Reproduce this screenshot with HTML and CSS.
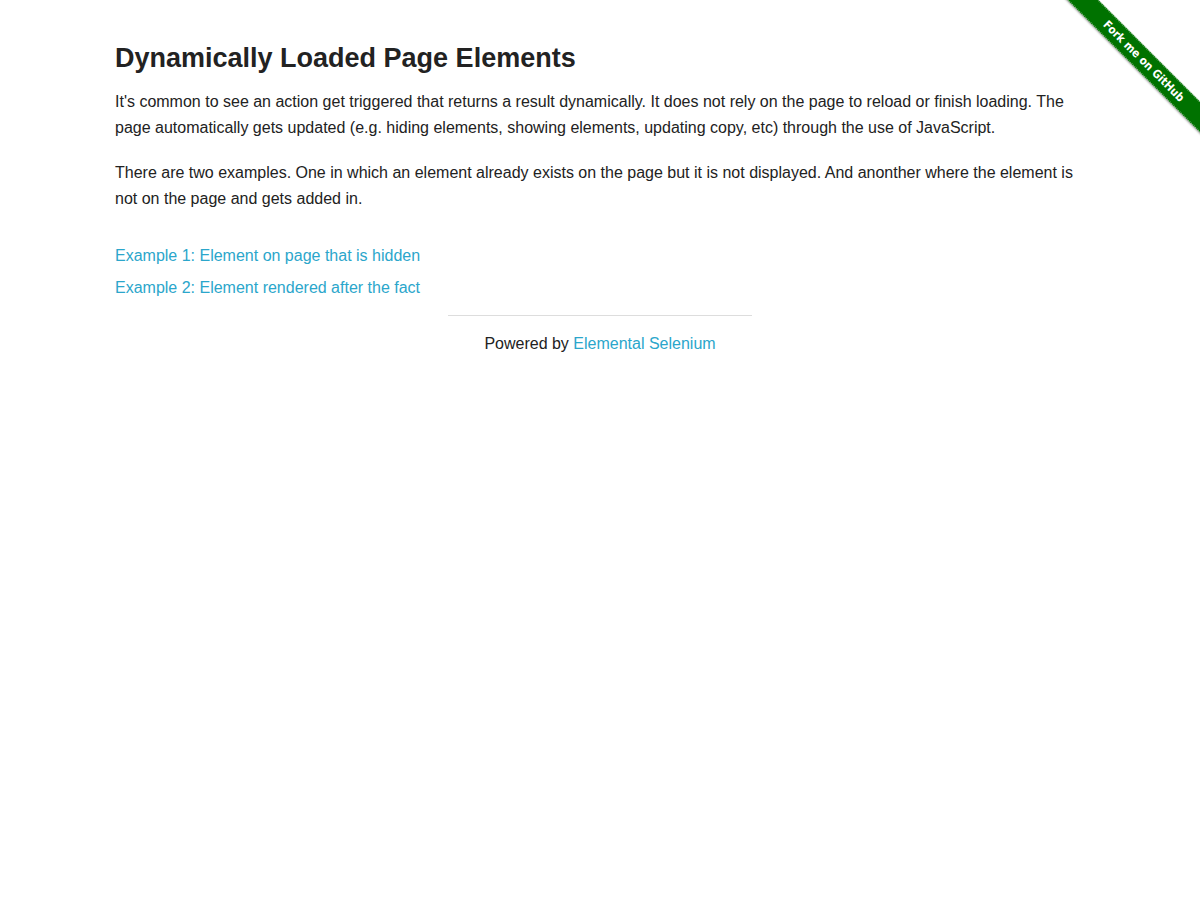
FILE: index.html
```html
<!DOCTYPE html>
<html>
<head>
<meta charset="utf-8">
<title>The Internet</title>
<link rel="stylesheet" href="styles.css">
</head>
<body>
<a class="ribbon" href="#"><span class="ribbon-band">Fork me on GitHub</span></a>
<div class="row">
  <div class="content">
    <h3 class="title">Dynamically Loaded Page Elements</h3>
    <p class="para">It's common to see an action get triggered that returns a result dynamically. It does not rely on the page to reload or finish loading. The page automatically gets updated (e.g. hiding elements, showing elements, updating copy, etc) through the use of JavaScript.</p>
    <p class="para">There are two examples. One in which an element already exists on the page but it is not displayed. And anonther where the element is not on the page and gets added in.</p>
    <div class="links">
      <a class="link" href="#">Example 1: Element on page that is hidden</a>
      <a class="link" href="#">Example 2: Element rendered after the fact</a>
    </div>
  </div>
</div>
<div class="footer">
  <hr class="rule">
  <div class="powered">Powered by <a class="link-inline" href="#">Elemental Selenium</a></div>
</div>
</body>
</html>
```
FILE: styles.css
```css
html, body {
  margin: 0;
  padding: 0;
  background: #fff;
}
body {
  font-family: "Liberation Sans", Arial, Helvetica, sans-serif;
  font-size: 16px;
  color: #222;
}
.row {
  max-width: 1000px;
  margin: 0 auto;
}
.content {
  padding: 39px 15px 0;
}
.title {
  margin: 0 0 12px;
  font-size: 27px;
  line-height: 38px;
  font-weight: bold;
  color: #222;
}
.para {
  margin: 0 0 20px;
  line-height: 25.6px;
}
.links {
  display: flex;
  flex-direction: column;
  align-items: flex-start;
  padding-top: 9px;
}
.link, .link-inline {
  color: #2ba6cb;
  text-decoration: none;
}
.link {
  line-height: 32px;
}
.footer {
  width: 304px;
  margin: 0 auto;
}
.rule {
  margin: 11px 0 0;
  border: 0;
  border-top: 1px solid #ddd;
  height: 0;
}
.powered {
  text-align: center;
  line-height: 24px;
  padding-top: 16px;
}
.ribbon {
  position: absolute;
  top: 0;
  right: 0;
  width: 149px;
  height: 149px;
  overflow: hidden;
  text-decoration: none;
}
.ribbon-band {
  position: absolute;
  left: -17px;
  top: 50px;
  width: 220px;
  height: 22px;
  box-sizing: border-box;
  background: #007200;
  border-top: 1px dotted rgba(255,255,255,0.55);
  border-bottom: 1px dotted rgba(255,255,255,0.55);
  transform: rotate(45deg);
  color: #fff;
  font-family: "DejaVu Sans Condensed", "Liberation Sans", sans-serif;
  font-weight: bold;
  font-size: 11.5px;
  line-height: 20px;
  text-align: center;
  box-shadow: 0 1px 2px rgba(0,0,0,0.35);
}
```
